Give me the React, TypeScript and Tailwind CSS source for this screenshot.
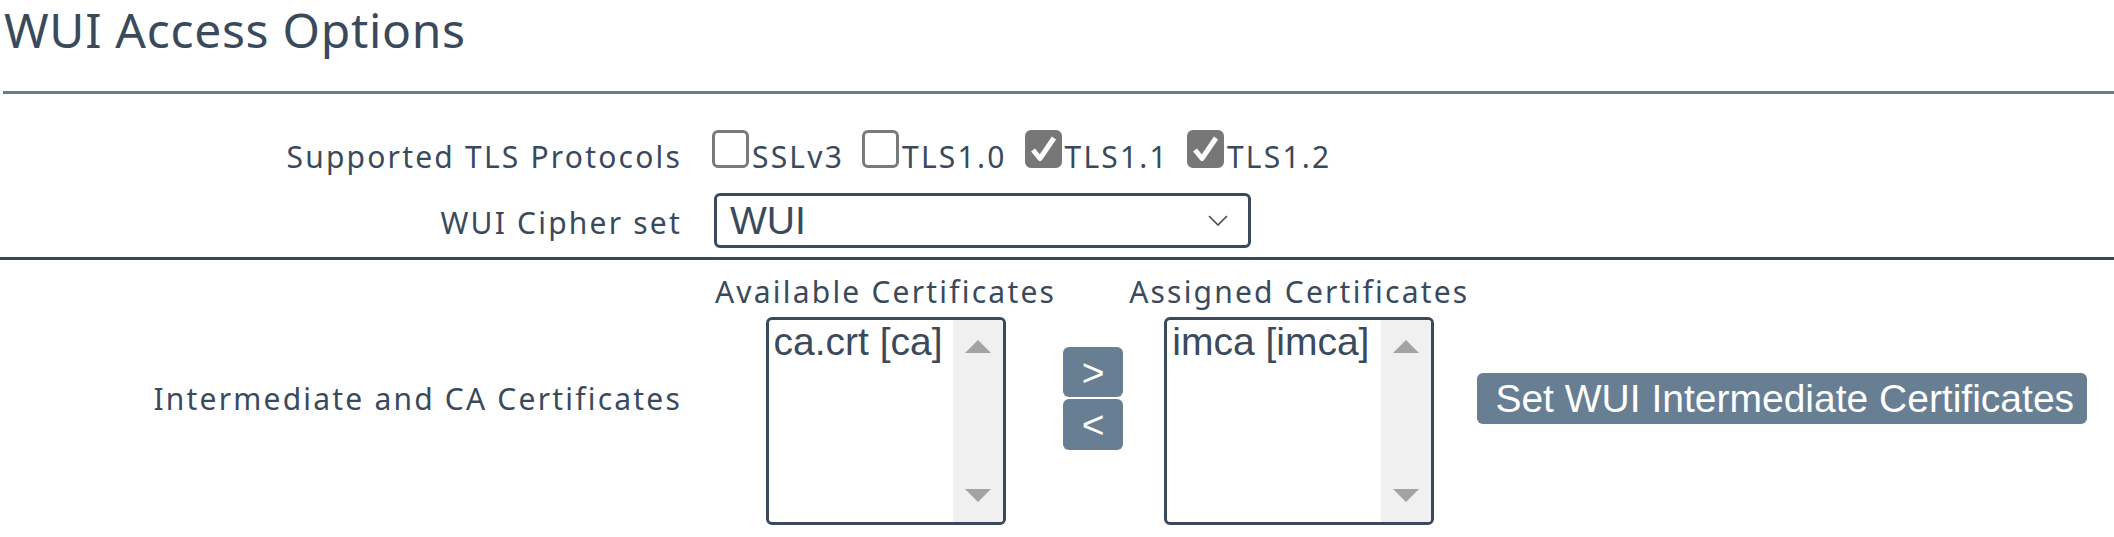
import React from "react";

const Checkbox = ({ checked }: { checked: boolean }) => (
    <span
        className={
            "inline-block w-[37px] h-[38px] rounded-[6px] border-[3px] mr-[3px] relative " +
            (checked ? "bg-[#777777] border-[#777777]" : "bg-white border-[#7a7a7a]")
        }
    >
        {checked && (
            <svg className="absolute -left-[3px] -top-[3px]" width="37" height="38" viewBox="0 0 37 38">
                <path d="M8 20 L15 28.5 L29 8" fill="none" stroke="white" strokeWidth="5" strokeLinejoin="round" />
            </svg>
        )}
    </span>
);

const ScrollTrack = () => (
    <div className="w-[50px] h-full bg-[#f0f0f0] flex flex-col justify-between items-center py-[20px]">
        <svg width="26" height="13" viewBox="0 0 26 13"><path d="M13 0 L26 13 L0 13 Z" fill="#a3a3a3" /></svg>
        <svg width="26" height="13" viewBox="0 0 26 13"><path d="M0 0 L26 0 L13 13 Z" fill="#a3a3a3" /></svg>
    </div>
);

const CertList = ({ title, item, width }: { title: string; item: string; width: string }) => (
    <div className="flex flex-col items-center">
        <div className="text-[30px] leading-[40px] tracking-[2.2px]">{title}</div>
        <div className={"mt-[5px] h-[208px] border-[3px] border-[#3a4a5c] rounded-[6px] flex overflow-hidden " + width}>
            <div className="flex-1 pl-[5px] font-['Liberation_Sans',Arial,sans-serif] text-[39px] leading-[44px] text-[#3a4a5c] whitespace-nowrap">
                {item}
            </div>
            <ScrollTrack />
        </div>
    </div>
);

export default function App() {
    const protocols = [
        { name: "SSLv3", on: false },
        { name: "TLS1.0", on: false },
        { name: "TLS1.1", on: true },
        { name: "TLS1.2", on: true },
    ];

    return (
        <div className="w-[2114px] h-[537px] bg-white overflow-hidden font-['Noto_Sans',sans-serif] text-[#3a4a5c]">
            <h1 className="pl-[4px] text-[48px] leading-[60px] tracking-[0.7px] font-normal">WUI Access Options</h1>
            <div className="mt-[31px] ml-[3px] h-[3px] bg-[#667c91]" />

            <div className="mt-[36px] flex items-baseline text-[30px] leading-[40px] tracking-[2.2px]">
                <div className="w-[682px] text-right">Supported TLS Protocols</div>
                <div className="ml-[30px] flex items-baseline">
                    {protocols.map((p, i) => (
                        <span key={p.name} className={"flex items-baseline " + (i > 0 ? "ml-[18px]" : "")}>
                            <Checkbox checked={p.on} />
                            <span>{p.name}</span>
                        </span>
                    ))}
                </div>
            </div>

            <div className="mt-[16px] flex items-baseline text-[30px] leading-[40px] tracking-[2.2px]">
                <div className="w-[682px] text-right">WUI Cipher set</div>
                <div className="ml-[32px] w-[537px] h-[55px] border-[3px] border-[#3a4a5c] rounded-[6px] pl-[13px] pr-[20px] flex items-baseline justify-between tracking-normal">
                    <span className="font-['Liberation_Sans',Arial,sans-serif] text-[39px] leading-[49px]">WUI</span>
                    <svg className="self-center" width="20" height="11" viewBox="0 0 20 11">
                        <path d="M1 1 L10 10 L19 1" fill="none" stroke="#4a4a4a" strokeWidth="1.6" />
                    </svg>
                </div>
            </div>

            <div className="mt-[9px] h-[3px] bg-[#384856]" />

            <div className="mt-[12px] flex items-center">
                <div className="w-[682px] text-right text-[30px] leading-[40px] tracking-[2.2px]">Intermediate and CA Certificates</div>
                <div className="ml-[33px] flex items-center">
                    <CertList title="Available Certificates" item="ca.crt [ca]" width="w-[240px]" />
                    <div className="ml-[7px] flex flex-col gap-[2px] font-['Liberation_Sans',Arial,sans-serif]">
                        <button className="w-[60px] h-[50px] rounded-[6px] bg-[#677e93] text-white text-[39px] leading-none">&gt;</button>
                        <button className="w-[60px] h-[51px] rounded-[6px] bg-[#677e93] text-white text-[39px] leading-none">&lt;</button>
                    </div>
                    <div className="ml-[6px]">
                        <CertList title="Assigned Certificates" item="imca [imca]" width="w-[270px]" />
                    </div>
                    <button className="ml-[8px] h-[51px] w-[610px] rounded-[6px] bg-[#677e93] text-white font-['Liberation_Sans',Arial,sans-serif] text-[39px] leading-[51px] text-left pl-[18px]">
                        Set WUI Intermediate Certificates
                    </button>
                </div>
            </div>
        </div>
    );
}
